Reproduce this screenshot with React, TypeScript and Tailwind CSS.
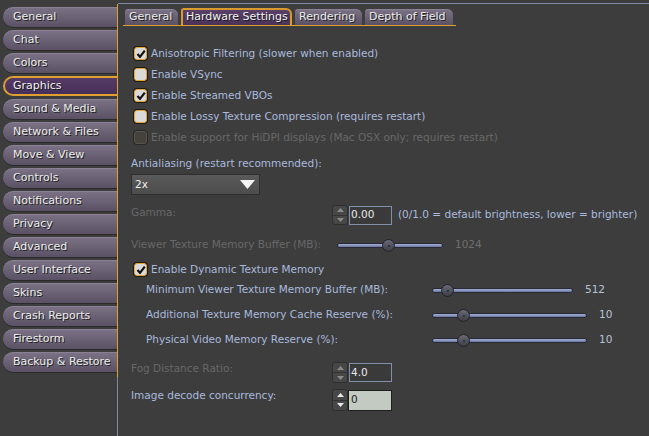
import React from "react"

const sideTabs = [
  "General",
  "Chat",
  "Colors",
  "Graphics",
  "Sound & Media",
  "Network & Files",
  "Move & View",
  "Controls",
  "Notifications",
  "Privacy",
  "Advanced",
  "User Interface",
  "Skins",
  "Crash Reports",
  "Firestorm",
  "Backup & Restore",
]

const topTabs = [
  { label: "General", w: "w-[53px]" },
  { label: "Hardware Settings", w: "w-[111px]" },
  { label: "Rendering", w: "w-[67px]" },
  { label: "Depth of Field", w: "w-[88px]" },
]

function CheckBox({ checked, disabled }: { checked?: boolean; disabled?: boolean }) {
  if (disabled) {
    return <div className="h-[13px] w-[13px] rounded-[3px] border border-[#5a5248] bg-[#45413c] shadow-[0_0_0_1px_#2a2a2a]" />
  }
  return (
    <div className="flex h-[13px] w-[13px] items-center justify-center rounded-[3px] border border-[#e8a428] bg-[#dadada] shadow-[0_0_0_1px_#1c1c1c]">
      {checked && (
        <svg width="10" height="10" viewBox="0 0 10 10">
          <path d="M1.5 5 L4 7.8 L8.8 1.6" fill="none" stroke="#111" strokeWidth="2.2" />
        </svg>
      )}
    </div>
  )
}

function CheckRow({ label, checked, disabled }: { label: string; checked?: boolean; disabled?: boolean }) {
  return (
    <div className="flex h-[21px] items-center gap-[4px] pl-[16px]">
      <CheckBox checked={checked} disabled={disabled} />
      <span className={disabled ? "text-[#686868]" : "text-[#a9bade]"}>{label}</span>
    </div>
  )
}

function Spinner({ bright }: { bright?: boolean }) {
  const tri = bright ? "#e8e8e8" : "#8a8a8a"
  return (
    <div className="flex h-full w-[16px] flex-col overflow-hidden rounded-[3px] border border-[#2e2e2e] bg-[#474747]">
      <div className="flex flex-1 items-center justify-center border-b border-[#333]">
        <svg width="7" height="4" viewBox="0 0 7 4">
          <path d="M0 4 L3.5 0 L7 4 Z" fill={tri} />
        </svg>
      </div>
      <div className="flex flex-1 items-center justify-center">
        <svg width="7" height="4" viewBox="0 0 7 4">
          <path d="M0 0 L3.5 4 L7 0 Z" fill={tri} />
        </svg>
      </div>
    </div>
  )
}

function Slider({ width, thumb }: { width: string; thumb: number }) {
  return (
    <div className={`relative h-[14px] ${width}`}>
      <div className="absolute left-0 right-0 top-[5px] h-[5px] rounded-full border border-[#2a2a35] bg-gradient-to-b from-[#a4b0d8] to-[#6a76a0]" />
      <div
        className="absolute top-[1px] h-[13px] w-[13px] rounded-full border border-[#22222a] bg-gradient-to-b from-[#6a6a78] to-[#3e3e48]"
        style={{ left: thumb - 6 }}
      >
        <div className="ml-[5px] mt-[5px] h-[2px] w-[2px] rounded-full bg-[#2a2a30]" />
      </div>
    </div>
  )
}

export default function App() {
  return (
    <div
      className="flex h-[436px] w-[649px] overflow-hidden bg-[#3d3d3d] text-[11px]"
      style={{ fontFamily: '"DejaVu Sans", "Liberation Sans", sans-serif' }}
    >
      {/* side tabs */}
      <div className="flex w-[118px] shrink-0 flex-col pt-[4px]">
        <div className="flex flex-col gap-[3px] border-r border-[#e0a030] pb-[5px] pt-[3px]">
          {sideTabs.map((t) => {
            const sel = t === "Graphics"
            return (
              <div
                key={t}
                className={
                  sel
                    ? "ml-[3px] flex h-[20px] items-center rounded-l-[10px] border-2 border-r-0 border-[#e0a030] bg-gradient-to-b from-[#553a66] to-[#45305a] pl-[8px] text-[#f0f0f0] [text-shadow:1px_1px_0_#1a1a1a]"
                    : "ml-[3px] flex h-[20px] items-center rounded-l-[10px] border-t border-[#8a8196] bg-gradient-to-b from-[#7a7184] to-[#5a5264] pl-[10px] text-[#ececec] [text-shadow:1px_1px_0_#222] shadow-[0_1px_0_#2a2a2a]"
                }
              >
                {t}
              </div>
            )
          })}
        </div>
        <div className="flex-1 border-r border-[#7d8aa0]" />
      </div>

      {/* panel */}
      <div className="mt-[3px] flex flex-1 flex-col border-t border-[#7d8aa0]">
        {/* top tabs */}
        <div className="ml-[5px] mt-[4px] flex w-[333px] items-end gap-[3px] border-b border-[#e0a030] pl-[2px]">
          {topTabs.map((t) => {
            const sel = t.label === "Hardware Settings"
            return (
              <div
                key={t.label}
                className={
                  sel
                    ? `${t.w} flex h-[17px] items-center rounded-tl-[3px] rounded-tr-[6px] border-2 border-b-0 border-[#d89a2c] bg-gradient-to-b from-[#5a4068] to-[#4a3258] pl-[3px] text-[#f2f2f2] [text-shadow:1px_1px_0_#1a1a1a]`
                    : `${t.w} flex h-[16px] items-center rounded-tl-[3px] rounded-tr-[6px] border-t border-[#8a8196] bg-gradient-to-b from-[#7a7184] to-[#5a5264] pl-[4px] text-[#ececec] [text-shadow:1px_1px_0_#222]`
                }
              >
                {t.label}
              </div>
            )
          })}
        </div>

        <div className="flex flex-col text-[10.5px]">
          <div className="mt-[17px] flex flex-col">
            <CheckRow label="Anisotropic Filtering (slower when enabled)" checked />
            <CheckRow label="Enable VSync" />
            <CheckRow label="Enable Streamed VBOs" checked />
            <CheckRow label="Enable Lossy Texture Compression (requires restart)" />
            <CheckRow label="Enable support for HiDPI displays (Mac OSX only; requires restart)" disabled />
          </div>

          <div className="mt-[9px] flex h-[14px] items-center pl-[13px] text-[#a9bade]">
            Antialiasing (restart recommended):
          </div>
          <div className="ml-[13px] mt-[3px] flex h-[21px] w-[129px] items-center justify-between border border-[#2e2e2e] bg-gradient-to-b from-[#5a5a5a] to-[#4c4c4c] pl-[3px] pr-[4px] text-[#f0f0f0]">
            <span>2x</span>
            <svg width="15" height="9" viewBox="0 0 15 9">
              <path d="M0 0 L15 0 L7.5 9 Z" fill="#f4f4f4" />
            </svg>
          </div>

          {/* gamma */}
          <div className="mt-[10px] flex h-[20px] items-center pl-[13px]">
            <span className="mb-[4px] w-[201px] text-[#686868]">Gamma:</span>
            <Spinner />
            <div className="ml-[1px] flex h-[19px] w-[43px] items-end border border-[#8090a8] bg-[#3a3a3a] pb-[1px] pl-[1px] text-[#e8e8e8]">
              0.00
            </div>
            <span className="mb-[1px] ml-[6px] text-[#a9bade]">(0/1.0 = default brightness, lower = brighter)</span>
          </div>

          {/* viewer texture memory */}
          <div className="mt-[13px] flex h-[14px] items-center pl-[13px]">
            <span className="w-[206px] text-[#686868]">Viewer Texture Memory Buffer (MB):</span>
            <Slider width="w-[106px]" thumb={51} />
            <span className="ml-[12px] text-[#6e6e6e]">1024</span>
          </div>

          <div className="mt-[7px]">
            <CheckRow label="Enable Dynamic Texture Memory" checked />
          </div>

          <div className="mt-[3px] flex h-[14px] items-center pl-[28px]">
            <span className="w-[286px] text-[#a9bade]">Minimum Viewer Texture Memory Buffer (MB):</span>
            <Slider width="w-[141px]" thumb={15} />
            <span className="ml-[12px] text-[#b8c2d6]">512</span>
          </div>
          <div className="mt-[11px] flex h-[14px] items-center pl-[28px]">
            <span className="w-[286px] text-[#a9bade]">Additional Texture Memory Cache Reserve (%):</span>
            <Slider width="w-[155px]" thumb={31} />
            <span className="ml-[12px] text-[#b8c2d6]">10</span>
          </div>
          <div className="mt-[11px] flex h-[14px] items-center pl-[28px]">
            <span className="w-[286px] text-[#a9bade]">Physical Video Memory Reserve (%):</span>
            <Slider width="w-[155px]" thumb={31} />
            <span className="ml-[12px] text-[#b8c2d6]">10</span>
          </div>

          {/* fog */}
          <div className="mt-[15px] flex h-[21px] items-center pl-[13px]">
            <span className="mb-[8px] w-[201px] text-[#686868]">Fog Distance Ratio:</span>
            <Spinner />
            <div className="ml-[1px] flex h-[19px] w-[43px] items-center border border-[#8090a8] bg-[#3a3a3a] pl-[1px] text-[#e8e8e8]">
              4.0
            </div>
          </div>

          {/* image decode */}
          <div className="mt-[6px] flex h-[22px] items-center pl-[13px]">
            <span className="mb-[8px] w-[201px] text-[#a9bade]">Image decode concurrency:</span>
            <Spinner bright />
            <div className="flex h-[21px] w-[44px] items-center border border-[#1e1e1e] bg-[#c2cac2] pl-[2px] text-[#222]">
              0
            </div>
          </div>
        </div>
      </div>
    </div>
  )
}
